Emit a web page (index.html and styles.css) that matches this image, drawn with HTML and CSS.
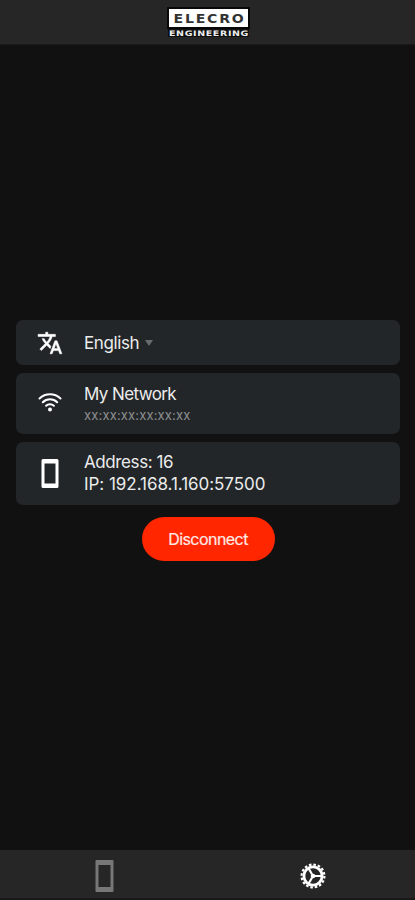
FILE: index.html
```html
<!DOCTYPE html>
<html lang="en">
<head>
<meta charset="utf-8">
<meta name="viewport" content="width=device-width, initial-scale=1">
<title>Elecro Engineering</title>
<link rel="stylesheet" href="styles.css">
</head>
<body>
<div class="app">
  <header class="header">
    <svg class="logo" width="83" height="32" viewBox="0 0 83 32" role="img">
      <rect width="83" height="22" fill="#080808"/>
      <rect x="2" y="2" width="79" height="18" fill="#fff"/>
      <text class="logo-name" x="6.500" y="15.500" textLength="72" lengthAdjust="spacingAndGlyphs">ELECRO</text>
      <rect x="1" y="22" width="81" height="8" fill="#101010"/>
      <text class="logo-sub" x="2" y="29" textLength="80" lengthAdjust="spacingAndGlyphs">ENGINEERING</text>
    </svg>
  </header>
  <main class="content">
    <section class="card card-language">
      <div class="icon"><svg width="26" height="26" viewBox="0 0 24 24" fill="#fff" stroke="#fff" stroke-width="0.500"><path d="M12.87 15.07l-2.54-2.51.03-.03c1.74-1.94 2.98-4.17 3.71-6.53H17V4h-7V2H8v2H1v1.99h11.17C11.5 7.92 10.44 9.75 9 11.35 8.07 10.32 7.3 9.19 6.69 8h-2c.73 1.63 1.73 3.17 2.98 4.56l-5.09 5.02L4 19l5-5 3.11 3.11.76-2.04zM18.5 10h-2L12 22h2l1.12-3h4.75L21 22h2l-4.5-12zm-2.62 7l1.62-4.33L19.12 17h-3.24z"/></svg></div>
      <div class="line">English</div><span class="caret"></span>
    </section>
    <section class="card card-network">
      <div class="icon icon-wifi"><svg width="26" height="22" viewBox="0 0 26 22" fill="none" stroke="#fff" stroke-width="2" stroke-linecap="round"><path d="M2.500 7.500a15.300 15.300 0 0 1 21 0M5.800 11.200a10.300 10.300 0 0 1 14.400 0M9.100 14.800a5.600 5.600 0 0 1 7.800 0"/><circle cx="13" cy="18.500" r="2" fill="#fff" stroke="none"/></svg></div>
      <div>
        <div class="line name">My Network</div>
        <div class="mac">xx:xx:xx:xx:xx:xx</div>
      </div>
    </section>
    <section class="card card-address">
      <div class="icon"><svg width="18" height="29" viewBox="0 0 18 29"><path fill="#fff" fill-rule="evenodd" d="M2 0h14q1.500 0 1.500 1.500v26q0 1.500-1.500 1.500h-14q-1.500 0-1.500-1.500v-26q0-1.500 1.500-1.500zM3.500 4.500v20h11v-20z"/></svg></div>
      <div class="address">
        <div class="line">Address: 16</div>
        <div class="line ip">IP: 192.168.1.160:57500</div>
      </div>
    </section>
    <button class="disconnect">Disconnect</button>
  </main>
  <nav class="tabs">
    <a class="tab"><svg width="19" height="32" viewBox="0 0 19 32"><path fill="#777" fill-rule="evenodd" d="M1.500 0h16q1 0 1 1v30q0 1-1 1h-16q-1 0-1-1v-30q0-1 1-1zM3.500 5v22h12v-22z"/></svg></a>
    <a class="tab tab-settings"><svg width="26" height="26" viewBox="-13 -13 26 26" fill="none" stroke="#fff"><circle r="11.400" stroke-width="2.200" stroke-dasharray="2.600 1.877"/><circle r="9.100" stroke-width="2.800"/><circle r="1.600" stroke-width="1.500" fill="#fff"/><path stroke-width="2.200" d="M2 0H8.500M-1 -1.700L-4.500 -7.800M-1 1.700L-4.500 7.800"/></svg></a>
  </nav>
</div>
</body>
</html>
```
FILE: styles.css
```css
* { box-sizing: border-box; }
body {
  margin: 0;
  background: #111;
  color: #ececec;
  font-family: Inter, "Liberation Sans", sans-serif;
}
.app {
  display: flex;
  flex-direction: column;
  height: 900px;
}
.header {
  display: flex;
  justify-content: center;
  height: 45px;
  padding-top: 7px;
  background: #262626;
  border-bottom: 1px solid #1b1b1b;
}
.logo { margin-left: 2px; }
.logo-name {
  font: 700 12px "DejaVu Sans", sans-serif;
  letter-spacing: 1.5px;
  fill: #333;
}
.logo-sub {
  font: 700 7.5px "DejaVu Sans", sans-serif;
  letter-spacing: 0.5px;
  fill: #eee;
}
.content {
  flex: 1;
  display: flex;
  flex-direction: column;
  justify-content: center;
  gap: 8px;
  padding: 0 15px 14px 16px;
}
.card {
  display: flex;
  align-items: center;
  border-radius: 7px;
  background: #222628;
}
.card-language { height: 45px; }
.card-network { height: 61px; }
.card-address { height: 63px; }
.icon {
  display: flex;
  justify-content: center;
  width: 68px;
  flex: none;
}
.icon svg { display: block; }
.icon-wifi { padding-bottom: 4px; }
.line {
  font-size: 17px;
  line-height: 22px;
  letter-spacing: -0.4px;
}
.name { letter-spacing: -0.6px; }
.ip { letter-spacing: -0.04px; }
.caret {
  margin-left: 6px;
  border: 4px solid transparent;
  border-top: 6px solid #686b6d;
  border-bottom: 0;
}
.address { padding-bottom: 1px; }
.mac {
  color: #8d8f90;
  font-size: 13px;
  line-height: 20px;
  letter-spacing: 0.15px;
}
.disconnect {
  align-self: center;
  width: 133px;
  height: 44px;
  margin: 4px 0 0 0;
  padding: 0;
  border: 0;
  border-radius: 22px;
  background: #ff2600;
  color: #ffe9e5;
  font: 16px Inter, sans-serif;
  letter-spacing: -0.55px;
  -webkit-text-stroke: 0.2px #ffe9e5;
}
.tabs {
  display: flex;
  height: 50px;
  background: #262626;
  border-bottom: 2px solid #1c1719;
}
.tab {
  flex: 1;
  display: flex;
  align-items: center;
  justify-content: center;
  padding: 3px 0 0 2px;
}
.tab-settings { padding-left: 4px; }
```
